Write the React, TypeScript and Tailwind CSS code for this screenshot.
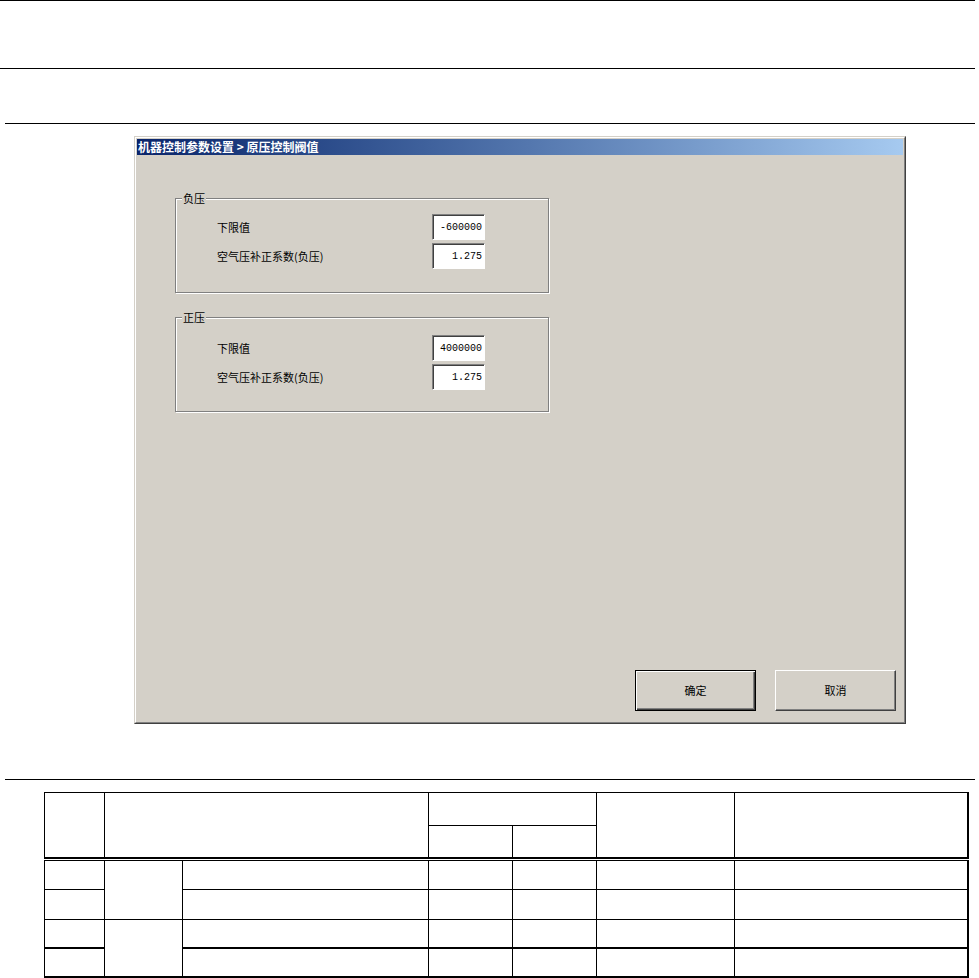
const Field = ({ value }: { value: string }) => (
  <div className="flex h-[26px] w-[53px] items-center justify-end border border-t-[#808080] border-l-[#808080] border-r-white border-b-white bg-white pr-[2px] font-['Liberation_Mono',monospace] text-[10px] text-black shadow-[inset_1px_1px_0_#404040]">
    {value}
  </div>
);

const GroupBox = ({
  title,
  rows,
  top,
}: {
  title: string;
  rows: { label: string; value: string }[];
  top: string;
}) => (
  <div
    className={`relative ml-[38px] h-[95px] w-[374px] border border-[#808080] shadow-[1px_1px_0_#fff,inset_1px_1px_0_#fff] ${top}`}
  >
    <span className="absolute -top-[8px] left-[6px] bg-[#d4d0c8] px-[1px] text-[11px] leading-[14px] text-black">
      {title}
    </span>
    <div className="flex flex-col gap-[3px]">
      {rows.map((r) => (
        <div key={r.label} className="flex items-center">
          <span className="w-[256px] pl-[41px] text-[11px] leading-[14px] text-black">
            {r.label}
          </span>
          <Field value={r.value} />
        </div>
      ))}
    </div>
  </div>
);

// body rows of the table: [row, bottom border, first row?]
const bodyRows = [
  { row: "row-start-4", b: "border-b", t: "border-t" },
  { row: "row-start-5", b: "border-b", t: "" },
  { row: "row-start-6", b: "border-b-2", t: "" },
  { row: "row-start-7", b: "border-b-2", t: "" },
];

export default function App() {
  return (
    <div className="min-h-screen w-[979px] bg-white font-['Noto_Sans_CJK_SC',sans-serif]">
      <div className="h-px w-[975px] bg-black" />
      <div className="mt-[67px] h-px w-[975px] bg-black" />
      <div className="mt-[54px] ml-[5px] h-px w-[970px] bg-black" />

      {/* dialog */}
      <div className="mt-[12px] ml-[134px] h-[588px] w-[772px] border border-t-[#d4d0c8] border-l-[#d4d0c8] border-r-[#404040] border-b-[#404040]">
        <div className="flex h-full flex-col border border-t-white border-l-white border-r-[#808080] border-b-[#808080] bg-[#d4d0c8] p-px">
          <div className="flex h-[16px] items-center bg-linear-to-r from-[#0a246a] to-[#a6caf0] pl-[1px] text-[12px] font-bold leading-[16px] text-white">
            机器控制参数设置 &gt; 原压控制阀值
          </div>
          <div className="flex flex-1 flex-col">
            <GroupBox
              title="负压"
              top="mt-[43px] pt-[15px]"
              rows={[
                { label: "下限值", value: "-600000" },
                { label: "空气压补正系数(负压)", value: "1.275" },
              ]}
            />
            <GroupBox
              title="正压"
              top="mt-[24px] pt-[17px]"
              rows={[
                { label: "下限值", value: "4000000" },
                { label: "空气压补正系数(负压)", value: "1.275" },
              ]}
            />
            <div className="mt-auto flex justify-end gap-[19px] pr-[7px] pb-[10px]">
              <button className="h-[41px] w-[121px] border border-black bg-[#d4d0c8] text-[11px] text-black shadow-[inset_1px_1px_0_#fff,inset_-1px_-1px_0_#404040,inset_-2px_-2px_0_#808080]">
                确定
              </button>
              <button className="h-[41px] w-[121px] border border-t-white border-l-white border-r-[#404040] border-b-[#404040] bg-[#d4d0c8] text-[11px] text-black shadow-[inset_-1px_-1px_0_#808080]">
                取消
              </button>
            </div>
          </div>
        </div>
      </div>

      <div className="mt-[55px] ml-[5px] h-px w-[970px] bg-black" />

      {/* table */}
      <div className="mt-[12px] ml-[44px] grid w-[925px] grid-cols-[61px_78px_246px_84px_84px_138px_234px] grid-rows-[34px_33px_1px_30px_30px_29px_29px] border-black">
        <div className="col-start-1 row-span-2 row-start-1 border-t border-r border-b-2 border-l border-black" />
        <div className="col-span-2 col-start-2 row-span-2 row-start-1 border-t border-r border-b-2 border-black" />
        <div className="col-span-2 col-start-4 row-start-1 border-t border-r border-b border-black" />
        <div className="col-start-4 row-start-2 border-r border-b-2 border-black" />
        <div className="col-start-5 row-start-2 border-r border-b-2 border-black" />
        <div className="col-start-6 row-span-2 row-start-1 border-t border-r border-b-2 border-black" />
        <div className="col-start-7 row-span-2 row-start-1 border-t border-r-2 border-b-2 border-black" />

        <div className="col-start-2 row-span-2 row-start-4 border-t border-r border-b border-black" />
        <div className="col-start-2 row-span-2 row-start-6 border-r border-b-2 border-black" />

        {bodyRows.map((r, i) => (
          <div key={i} className="contents">
            <div className={`col-start-1 ${r.row} ${r.t} ${r.b} border-r border-l border-black`} />
            <div className={`col-start-3 ${r.row} ${r.t} ${r.b} border-r border-black`} />
            <div className={`col-start-4 ${r.row} ${r.t} ${r.b} border-r border-black`} />
            <div className={`col-start-5 ${r.row} ${r.t} ${r.b} border-r border-black`} />
            <div className={`col-start-6 ${r.row} ${r.t} ${r.b} border-r border-black`} />
            <div className={`col-start-7 ${r.row} ${r.t} ${r.b} border-r-2 border-black`} />
          </div>
        ))}
      </div>
    </div>
  );
}
